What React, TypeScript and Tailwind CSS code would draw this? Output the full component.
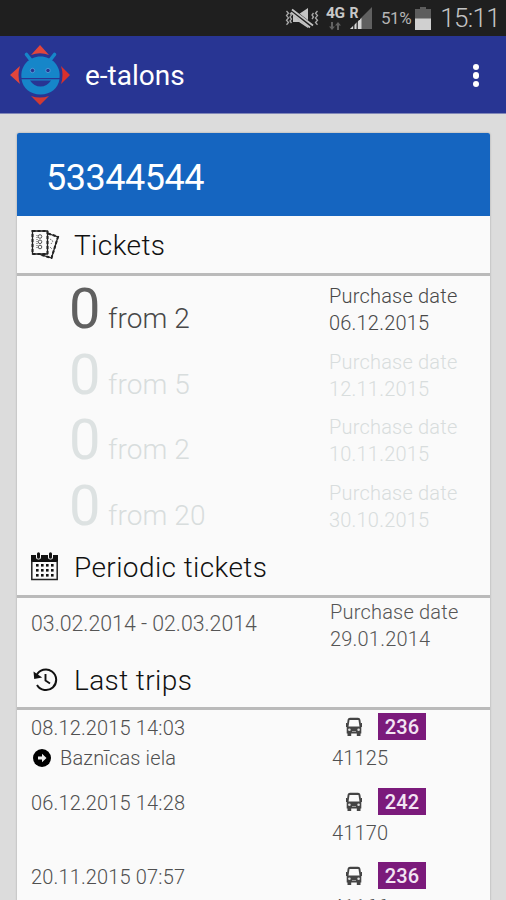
import React from 'react';
import clsx from 'clsx';

interface Ticket {
  left: number;
  total: number;
  date: string;
  active?: boolean;
}

interface Trip {
  time: string;
  stop?: string;
  route: string;
  vehicle: string;
}

const tickets: Ticket[] = [
  { left: 0, total: 2, date: '06.12.2015', active: true },
  { left: 0, total: 5, date: '12.11.2015' },
  { left: 0, total: 2, date: '10.11.2015' },
  { left: 0, total: 20, date: '30.10.2015' },
];

const trips: Trip[] = [
  { time: '08.12.2015 14:03', stop: 'Baznīcas iela', route: '236', vehicle: '41125' },
  { time: '06.12.2015 14:28', route: '242', vehicle: '41170' },
  { time: '20.11.2015 07:57', route: '236', vehicle: '41166' },
];

function StatusBar() {
  return (
    <div className="flex h-9 shrink-0 items-center justify-end bg-[#1f1f1f] pr-[6px] text-[#b4b4b4]">
      <svg className="mr-[7px] h-[22px] w-[34px]" viewBox="0 0 34 22" fill="none">
        <path d="M8 7h6l9-6v20l-9-6H8z" fill="#c4c4c4" />
        <path d="M6.500 3.500 27 19.500" stroke="#1f1f1f" strokeWidth="5" />
        <path d="M7 2.500 28 18.500" stroke="#c4c4c4" strokeWidth="1.800" />
        <path d="M6 5.500 25 20.500" stroke="#c4c4c4" strokeWidth="1.800" />
        <path
          d="M1.500 4l2 2.300-2 2.300 2 2.300-2 2.300 2 2.300-2 2.300M5 6l1.500 2L5 10l1.500 2L5 14l1.500 2M32.500 4l-2 2.300 2 2.300-2 2.300 2 2.300-2 2.300 2 2.300M28.500 6 27 8l1.500 2-1.500 2"
          stroke="#aaa"
          strokeWidth="1.300"
        />
      </svg>
      <div className="mr-[4px] flex h-6 w-[19px] flex-col items-center">
        <span className="text-[15.5px] leading-[15px] font-bold tracking-[-0.3px] text-[#c8c8c8]">4G</span>
        <svg className="mt-px h-[8px] w-[12px]" viewBox="0 0 12 8" fill="#626262">
          <path d="M2 0h2v4.500h2L3 8 0 4.500h2zM8 8h2V3.500h2L9 0 6 3.500h2z" />
        </svg>
      </div>
      <svg className="mr-[9px] h-6 w-[23px]" viewBox="0 0 23 24">
        <path d="M23 1v22H1z" fill="#606060" />
        <path d="M12.500 12v11H1z" fill="#d6d6d6" />
        <path d="M4.800 17v6M8.200 14v9" stroke="#1f1f1f" strokeWidth="1.200" />
        <path d="M0 0h11v14H0z" fill="#1f1f1f" />
        <text x="0.500" y="12" fontSize="14" fontWeight="700" fill="#c8c8c8">
          R
        </text>
      </svg>
      <span className="mr-[4px] text-[17px] leading-5 tracking-[-0.4px]">51%</span>
      <svg className="mr-[9px] h-[23px] w-4" viewBox="0 0 16 23">
        <path d="M5 0h6v2h5v21H0V2h5z" fill="#5d5d5d" />
        <path d="M0 11.500h16V23H0z" fill="#d0d0d0" />
      </svg>
      <span className="text-[26px] leading-9 font-light tracking-[-0.700px] text-[#c4c4c4]">15:11</span>
    </div>
  );
}

function Logo() {
  return (
    <svg className="h-[60px] w-[60px]" viewBox="0 0 60 60">
      <path d="M30 0l9 10q-9-3.500-18 0z" fill="#e2463c" />
      <path d="M30 60l9-9q-9 3-18 0z" fill="#d13a33" />
      <path d="M0 30l10-9q-3 9 0 18z" fill="#e2463c" />
      <path d="M60 30l-9-9q3 9 0 18z" fill="#d9302c" />
      <path d="M16.500 9.500l5.500 7M44.500 9.500l-5.500 7" stroke="#1686c9" strokeWidth="3.600" strokeLinecap="round" />
      <path d="M11.500 33C10 21 19 11.500 30.500 11.500S51 21 49.500 33z" fill="#1686c9" />
      <path d="M11.500 34.300h38C48 43.500 41 49.500 30.500 49.500S13 43.500 11.500 34.300z" fill="#1686c9" />
      <path d="M20 35.500h21Q37 41.500 30.500 41.500T20 35.500z" fill="#283593" />
      <circle cx="22.500" cy="25.500" r="2.200" fill="#283593" stroke="#55a6dd" strokeWidth="0.800" />
      <circle cx="38" cy="25.500" r="2.200" fill="#283593" stroke="#55a6dd" strokeWidth="0.800" />
    </svg>
  );
}

function TicketsIcon() {
  return (
    <svg className="h-[29px] w-[29px]" viewBox="0 0 29 29" fill="none" stroke="#222">
      <path d="M17 3.500l10 3.300L20.500 28 9 24.500" strokeWidth="1.300" />
      <path d="M17 3.500l10 3.300L20.500 28 9 24.500" strokeDasharray="3 2" strokeWidth="2" />
      <path d="M1.500 1H16.500v23h-15z" fill="#fafafa" strokeWidth="1.300" />
      <path d="M1.500 1H16.500v23h-15z" strokeWidth="2" strokeDasharray="3 2" />
      <g stroke="#555" strokeWidth="1">
        <circle cx="9" cy="6.500" r="1.800" />
        <circle cx="9" cy="11.800" r="1.800" />
        <circle cx="9" cy="17" r="1.800" />
        <path d="M6 5v14M19 9l3 2-2 3M19 17l2 2" strokeDasharray="1 1" />
      </g>
    </svg>
  );
}

function CalendarIcon() {
  return (
    <svg className="h-[29px] w-[27px]" viewBox="0 0 27 29" fill="#111">
      <path d="M0 3h27v7H0z" />
      <path d="M.8 9v18.500h25.400V9" fill="none" stroke="#222" strokeWidth="1.500" />
      <path d="M7.500 2v3M19.500 2v3" stroke="#fafafa" strokeWidth="5" strokeLinecap="round" />
      <path d="M7.500 1.700v3.500M19.500 1.700v3.500" stroke="#111" strokeWidth="3" strokeLinecap="round" />
      {[12, 17, 22].map((y) =>
        [5, 10, 15, 20].map((x) => <rect key={`${x}-${y}`} x={x} y={y} width="2.600" height="2.600" />)
      )}
    </svg>
  );
}

function HistoryIcon() {
  return (
    <svg className="ml-[2px] h-6 w-[26px]" viewBox="0 0 26 24" fill="none" stroke="#111" strokeWidth="2">
      <path d="M3.500 7.500A10.300 10.300 0 1 1 4 17" />
      <path d="M.5 3.500l.7 7.500 8-1.500z" fill="#111" stroke="none" />
      <path d="M12.500 6v6.500l4.500 3" strokeWidth="1.900" />
    </svg>
  );
}

function BusIcon() {
  return (
    <svg className="mt-px h-5 w-4" viewBox="0 0 16 20" fill="#444">
      <path d="M4 .7h8q2 0 2.400 2L15.300 10v6.500H.7V10l.9-7.300Q2 .7 4 .7z" />
      <path d="M3.500 3h9l1 6.500h-11z" fill="#fafafa" />
      <path d="M1.500 15h3.700v4H1.500zM10.800 15h3.700v4h-3.700zM0 6h1.300v4H0zM14.700 6H16v4h-1.300z" />
      <circle cx="3.400" cy="12.800" r="1.300" fill="#ddd" />
      <circle cx="12.600" cy="12.800" r="1.300" fill="#ddd" />
      <path d="M6 14.500h4" stroke="#999" />
    </svg>
  );
}

function SectionHeader({ icon, title, className }: { icon: React.ReactNode; title: string; className: string }) {
  return (
    <div className={clsx('flex items-center border-b-[3px] border-[#bababa] pl-[14px]', className)}>
      <div className="flex w-[43px]">{icon}</div>
      <h2 className="pt-[2px] text-[28px] leading-8 font-light tracking-[0.4px] text-[#111]">{title}</h2>
    </div>
  );
}

function PurchaseDate({ date }: { date: string }) {
  return (
    <div className="text-[20px] leading-[27px] font-light tracking-[0.2px]">
      <p>Purchase date</p>
      <p>{date}</p>
    </div>
  );
}

export default function App() {
  return (
    <div className="flex h-[900px] w-[506px] flex-col overflow-hidden bg-[#dcdcdc] font-['Roboto',sans-serif]">
      <StatusBar />
      <header className="flex h-[78px] shrink-0 items-center border-b border-[#8087b8] bg-[#283593] pl-[10px] text-white">
        <Logo />
        <h1 className="ml-[15px] flex-1 pt-[3px] text-[28px] leading-8">e-talons</h1>
        <button className="mt-[2px] mr-[27px] flex flex-col gap-[2px]" aria-label="Menu">
          <span className="h-[6.5px] w-[6.5px] rounded-full bg-white" />
          <span className="h-[6.5px] w-[6.5px] rounded-full bg-white" />
          <span className="h-[6.5px] w-[6.5px] rounded-full bg-white" />
        </button>
      </header>

      <main className="mt-[19px] mr-[16px] ml-[17px] h-[900px] shrink-0 rounded-t-[2px] bg-[#fafafa] shadow-[0_0_2px_#999]">
        <div className="flex h-[83px] items-center rounded-t-[2px] bg-[#1565c0] pt-[6px] pl-[29px] text-[36px] tracking-[-0.5px] text-white">
          53344544
        </div>

        <SectionHeader icon={<TicketsIcon />} title="Tickets" className="h-[60px]" />
        {tickets.map((ticket) => (
          <div
            key={ticket.date}
            className={clsx('flex h-[65.6px]', ticket.active ? 'text-[#484848]' : 'text-[#d8dddd]')}
          >
            <div className="flex w-[312px] items-baseline pl-[52px]">
              <span className={clsx('w-[39px] text-[56px] leading-[66px]', ticket.active ? 'text-[#606060]' : 'text-[#dde2e2]')}>
                {ticket.left}
              </span>
              <span className="text-[28px] font-light tracking-[0.1px]">from {ticket.total}</span>
            </div>
            <div className="pt-[7px]">
              <PurchaseDate date={ticket.date} />
            </div>
          </div>
        ))}

        <SectionHeader icon={<CalendarIcon />} title="Periodic tickets" className="h-[60px]" />
        <div className="flex h-[54px] text-[#555]">
          <p className="w-[313px] pt-3 pl-[14px] text-[21.3px] leading-7 font-light">03.02.2014 - 02.03.2014</p>
          <div className="pt-px">
            <PurchaseDate date="29.01.2014" />
          </div>
        </div>

        <SectionHeader icon={<HistoryIcon />} title="Last trips" className="h-[58px]" />
        {trips.map((trip) => (
          <div key={trip.time} className="flex h-[74.5px] text-[20px] leading-7 font-light tracking-[0.15px] text-[#505050]">
            <div className="w-[315px] pt-[4px] pl-[14px]">
              <p>{trip.time}</p>
              {trip.stop && (
                <div className="mt-[2px] flex items-center">
                  <svg className="mr-[9px] ml-[2px] h-[18px] w-[18px]" viewBox="0 0 18 18">
                    <circle cx="9" cy="9" r="9" fill="#000" />
                    <path d="M5 7.500h4V4.700L13.500 9 9 13.300v-2.800H5z" fill="#eee" />
                  </svg>
                  <span>{trip.stop}</span>
                </div>
              )}
            </div>
            <div className="pt-[3px]">
              <div className="flex items-center pl-[14px]">
                <BusIcon />
                <span className="ml-4 h-[27px] w-12 bg-[#7b1a7b] text-center leading-[28px] font-medium text-[#f3e4f3]">
                  {trip.route}
                </span>
              </div>
              <p className="mt-1">{trip.vehicle}</p>
            </div>
          </div>
        ))}
      </main>
    </div>
  );
}
